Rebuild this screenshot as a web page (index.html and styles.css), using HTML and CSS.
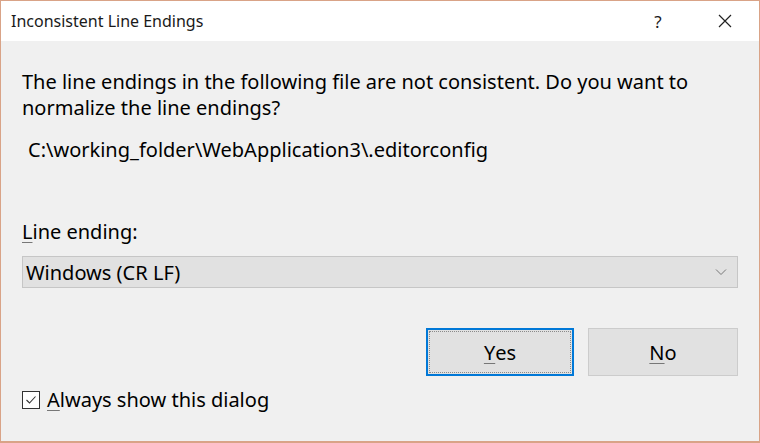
FILE: index.html
```html
<!DOCTYPE html>
<html>
<head>
<meta charset="utf-8">
<link rel="stylesheet" href="styles.css">
</head>
<body>
<div class="window">
  <div class="titlebar">
    <div class="title">Inconsistent Line Endings</div>
    <div class="tb-buttons">
      <span class="tb-help">?</span>
      <span class="tb-close"><svg width="16" height="16" viewBox="0 0 16 16"><path d="M2 2 L14 14 M14 2 L2 14" stroke="#222" stroke-width="1.2" fill="none"/></svg></span>
    </div>
  </div>
  <div class="content">
    <p class="message">The line endings in the following file are not consistent. Do you want to normalize the line endings?</p>
    <p class="path">C:\working_folder\WebApplication3\.editorconfig</p>
    <div class="label"><u>L</u>ine ending:</div>
    <div class="combo">
      <span>Windows (CR LF)</span>
      <svg class="chev" width="12" height="8" viewBox="0 0 12 8"><path d="M1 1.5 L6 6.5 L11 1.5" stroke="#777" stroke-width="1" fill="none"/></svg>
    </div>
    <div class="buttons">
      <div class="btn btn-default"><span class="focus"><u>Y</u>es</span></div>
      <div class="btn"><span><u>N</u>o</span></div>
    </div>
    <div class="check">
      <span class="box"><svg width="14" height="14" viewBox="0 0 14 14"><path d="M2.5 7 L5.5 10 L11.5 3.5" stroke="#333" stroke-width="1.1" fill="none"/></svg></span>
      <span><u>A</u>lways show this dialog</span>
    </div>
  </div>
</div>
</body>
</html>
```
FILE: styles.css
```css
html, body {
  margin: 0;
  padding: 0;
}
body {
  font-family: "Noto Sans", "Open Sans", sans-serif;
  color: #000;
}
.window {
  width: 760px;
  height: 443px;
  box-sizing: border-box;
  border: 1px solid #d9a387;
  border-bottom-width: 2px;
  background: #f0f0f0;
  display: flex;
  flex-direction: column;
}
.titlebar {
  height: 40px;
  flex: none;
  background: #fff;
  display: flex;
  align-items: center;
  justify-content: space-between;
  padding-left: 10px;
}
.title {
  font-size: 16px;
  color: #1a1a1a;
}
.tb-buttons {
  display: flex;
  align-items: center;
}
.tb-help {
  font-size: 17px;
  width: 66px;
  text-align: center;
  color: #1a1a1a;
}
.tb-close {
  width: 68px;
  display: flex;
  justify-content: center;
}
.content {
  padding: 0 21px 0 21px;
  display: flex;
  flex-direction: column;
  font-size: 20px;
}
.message {
  margin: 28px 0 0 0;
  line-height: 26px;
}
.path {
  margin: 16px 0 0 6px;
  line-height: 26px;
}
.label {
  margin-top: 56px;
  line-height: 26px;
}
u {
  text-decoration-thickness: 1px;
  text-underline-offset: 3px;
  text-decoration-color: #777;
}
.combo {
  margin-top: 11px;
  height: 32px;
  box-sizing: border-box;
  border: 1px solid #c6c6c6;
  background: #e1e1e1;
  display: flex;
  align-items: center;
  justify-content: space-between;
  padding: 0 10px 0 3px;
}
.chev {
  display: block;
}
.buttons {
  margin-top: 40px;
  display: flex;
  justify-content: flex-end;
  gap: 14px;
}
.btn {
  width: 150px;
  height: 48px;
  box-sizing: border-box;
  border: 1px solid #cccccc;
  background: #e1e1e1;
  display: flex;
  align-items: center;
  justify-content: center;
}
.btn-default {
  width: 148px;
  border: 2px solid #0078d7;
  padding: 1px;
}
.btn-default .focus {
  flex: 1;
  align-self: stretch;
  border: 1px dotted #8a8a8a;
  display: flex;
  align-items: center;
  justify-content: center;
}
.check {
  margin-top: 11px;
  display: flex;
  align-items: center;
  gap: 7px;
  line-height: 26px;
}
.box {
  width: 18px;
  height: 18px;
  box-sizing: border-box;
  border: 1px solid #333;
  background: #fff;
  display: flex;
  align-items: center;
  justify-content: center;
}
.box svg {
  display: block;
}
```
